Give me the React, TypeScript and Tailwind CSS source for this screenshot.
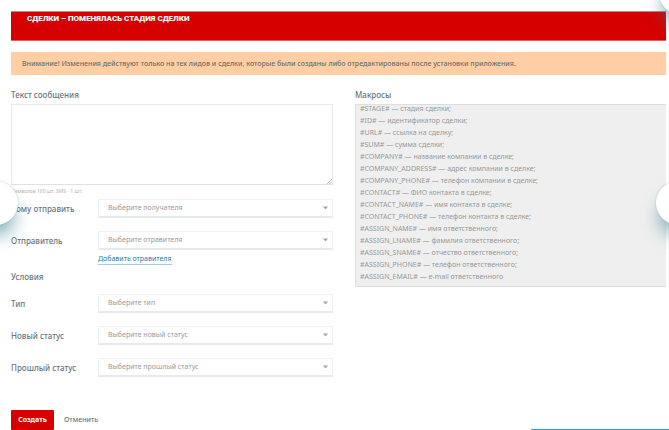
import React from "react";

const macros = [
  "#STAGE# — стадия сделки;",
  "#ID# — идентификатор сделки;",
  "#URL# — ссылка на сделку;",
  "#SUM# — сумма сделки;",
  "#COMPANY# — название компании в сделке;",
  "#COMPANY_ADDRESS# — адрес компании в сделке;",
  "#COMPANY_PHONE# — телефон компании в сделке;",
  "#CONTACT# — ФИО контакта в сделке;",
  "#CONTACT_NAME# — имя контакта в сделке;",
  "#CONTACT_PHONE# — телефон контакта в сделке;",
  "#ASSIGN_NAME# — имя ответственного;",
  "#ASSIGN_LNAME# — фамилия ответственного;",
  "#ASSIGN_SNAME# — отчество ответственного;",
  "#ASSIGN_PHONE# — телефон ответственного;",
  "#ASSIGN_EMAIL# — e-mail ответственного",
];

function SelectRow({ id, label, placeholder }: { id: string; label: string; placeholder: string }) {
  return (
    <div className="flex items-center">
      <label htmlFor={id} className="w-[87px] shrink-0 whitespace-nowrap text-[8px] font-medium leading-[12px] text-[#68757d]">
        {label}
      </label>
      <div className="relative min-w-0 flex-1">
        <select
          id={id}
          className="block h-[19px] w-full appearance-none border border-b-2 border-[#f0f2f2] border-b-[#e6eaeb] bg-white pl-[9px] pt-px text-[7px] text-[#999]"
        >
          <option>{placeholder}</option>
        </select>
        <svg className="pointer-events-none absolute right-[5px] top-[7px] h-[4px] w-[5px]" viewBox="0 0 5 4" aria-hidden="true">
          <path d="M0 0.5h5L2.5 3.5z" fill="#a3a3a3" />
        </svg>
      </div>
    </div>
  );
}

export default function App() {
  return (
    <div className="relative h-screen overflow-hidden bg-white pl-[11px] pr-[3px] pt-[11px] font-['Noto_Sans','Open_Sans',sans-serif]">
      <header className="h-[30px] border-y border-[#e06060] border-t-[#d08080] bg-[#d60000] pl-4">
        <h1 className="font-['Roboto',sans-serif] text-[8px] font-black uppercase leading-[14px] text-white">
          Сделки – поменялась стадия сделки
        </h1>
      </header>
      <p className="mt-[11px] bg-[#ffcea5] pl-[11px] text-[7px] font-medium leading-[23px] text-[#6b6f69]">
        Внимание! Изменения действуют только на тех лидов и сделки, которые были созданы либо отредактированы после установки приложения.
      </p>

      <main className="mt-[14px] grid grid-cols-[322fr_311fr] gap-[22px]">
        <form>
          <label htmlFor="message" className="block text-[8px] font-medium leading-[12px] text-[#68757d]">
            Текст сообщения
          </label>
          <div className="relative mt-[3px]">
            <textarea id="message" className="block h-[81px] w-full resize-none border border-[#e6eaec] border-b-[#dde2e4] bg-white" />
            <svg className="pointer-events-none absolute bottom-[1px] right-[1px] h-[5px] w-[5px]" viewBox="0 0 5 5" aria-hidden="true">
              <path d="M0 5L5 0M2.5 5L5 2.5" stroke="#aaa" strokeWidth="0.8" />
            </svg>
          </div>
          <p className="mt-[2px] text-[5px] leading-[8px] text-[#b5b5b5]">Символов 160 шт. SMS - 1 шт.</p>

          <div className="mt-1 flex flex-col gap-[13px]">
            <SelectRow id="recipient" label="Кому отправить" placeholder="Выберите получателя" />
            <SelectRow id="sender" label="Отправитель" placeholder="Выберите отравителя" />
          </div>
          <div className="mt-1 flex pl-[87px]">
            <a href="#sender" className="border-b border-[#a5cbe2] text-[7px] leading-[10px] text-[#2579b0]">
              Добавить отравителя
            </a>
          </div>
          <h2 className="mt-[6px] text-[8px] font-medium leading-[12px] text-[#68757d]">Условия</h2>
          <div className="mt-[11px] flex flex-col gap-[13px]">
            <SelectRow id="type" label="Тип" placeholder="Выберите тип" />
            <SelectRow id="new-status" label="Новый статус" placeholder="Выберите новый статус" />
            <SelectRow id="old-status" label="Прошлый статус" placeholder="Выберите прошлый статус" />
          </div>
          <div className="mt-[33px] flex items-center">
            <button type="submit" className="h-[20px] w-[43px] rounded-[1px] bg-[#d60000] text-[7px] font-bold text-white">
              Создать
            </button>
            <button type="button" className="ml-[10px] text-[7px] font-medium text-[#6b757c]">
              Отменить
            </button>
          </div>
        </form>

        <section>
          <h2 className="text-[8px] font-medium leading-[12px] text-[#68757d]">Макросы</h2>
          <ul className="mt-[3px] h-[183px] border border-r-0 border-[#dedede] bg-[#efefef] pl-1 text-[7px] leading-[12px] text-[#999]">
            {macros.map((macro) => (
              <li key={macro} className="whitespace-nowrap first:-mt-[2px]">
                {macro}
              </li>
            ))}
          </ul>
        </section>
      </main>

      <div className="absolute -left-[26px] top-[181px] size-[44px] rounded-full bg-white shadow-[0_14px_18px_-4px_rgba(40,120,140,0.6),0_0_2px_rgba(60,110,120,0.35)]" />
      <div className="absolute -right-[31px] top-[181px] size-[44px] rounded-full bg-white shadow-[0_14px_18px_-4px_rgba(40,120,140,0.6),0_0_2px_rgba(60,110,120,0.35)]" />
      <div className="absolute -right-[34px] -top-[29px] size-[44px] rounded-full bg-white shadow-[0_14px_18px_-4px_rgba(40,120,140,0.6),0_0_2px_rgba(60,110,120,0.35)]" />
      <div className="absolute bottom-0 right-0 h-px w-[138px] rounded-l bg-[#1ba0d8]" />
    </div>
  );
}
